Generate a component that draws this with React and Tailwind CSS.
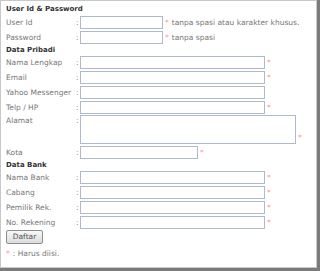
const Star = ({ className = '' }) => <span className={`text-[#f89a9a] ml-[2px] ${className}`}>*</span>

const Row = ({ label, width, star = true, note }) => (
    <div className="flex items-center h-[15px]">
        <span className="w-[70px] shrink-0">{label}</span>
        <span className="w-[4px] shrink-0">:</span>
        <input
            type="text"
            className="h-[13px] border border-[#aebacb] bg-white outline-none"
            style={{ width }}
        />
        {star && <Star />}
        {note && <span className="ml-[3px]">{note}</span>}
    </div>
)

const Title = ({ children, className = '' }) => (
    <div className={`font-bold text-[#333] text-[7px] ${className}`}>{children}</div>
)

export default function App() {
    return (
        <div
            className="w-[320px] h-[271px] bg-white border-r-[3px] border-b-[3px] border-[#7b7b7b]"
            style={{ fontFamily: '"DejaVu Sans", sans-serif' }}
        >
            <div className="h-full border border-[#c8c8c8] pl-[5px] text-[7.5px] text-[#777] leading-[10px]">
                <Title className="h-[14px] pt-[3px] leading-[10px]">User Id &amp; Password</Title>
                <Row label="User Id" width={83} note="tanpa spasi atau karakter khusus." />
                <Row label="Password" width={83} note="tanpa spasi" />

                <Title className="h-[10px] leading-[10px]">Data Pribadi</Title>
                <Row label="Nama Lengkap" width={185} />
                <Row label="Email" width={185} />
                <Row label="Yahoo Messenger" width={185} star={false} />
                <Row label="Telp / HP" width={185} />
                <div className="flex items-start h-[30px]">
                    <span className="w-[70px] shrink-0 pt-[1px]">Alamat</span>
                    <span className="w-[4px] shrink-0 pt-[1px]">:</span>
                    <textarea className="w-[216px] h-[29px] border border-[#aebacb] bg-white outline-none resize-none" />
                    <Star className="self-end mb-[2px]" />
                </div>
                <Row label="Kota" width={118} />

                <Title className="h-[10px] leading-[10px]">Data Bank</Title>
                <Row label="Nama Bank" width={185} />
                <Row label="Cabang" width={185} />
                <Row label="Pemilik Rek." width={185} />
                <Row label="No. Rekening" width={185} />

                <button className="w-[37px] h-[14px] border border-[#8c8c8c] rounded-[2px] bg-gradient-to-b from-[#f8f8f8] to-[#dcdcdc] text-[#555] text-[7.5px] leading-[12px]">
                    Daftar
                </button>

                <div className="h-[20px] flex items-center">
                    <span className="text-[#f89a9a]">*</span>
                    <span className="ml-[3px]">: Harus diisi.</span>
                </div>
            </div>
        </div>
    )
}
